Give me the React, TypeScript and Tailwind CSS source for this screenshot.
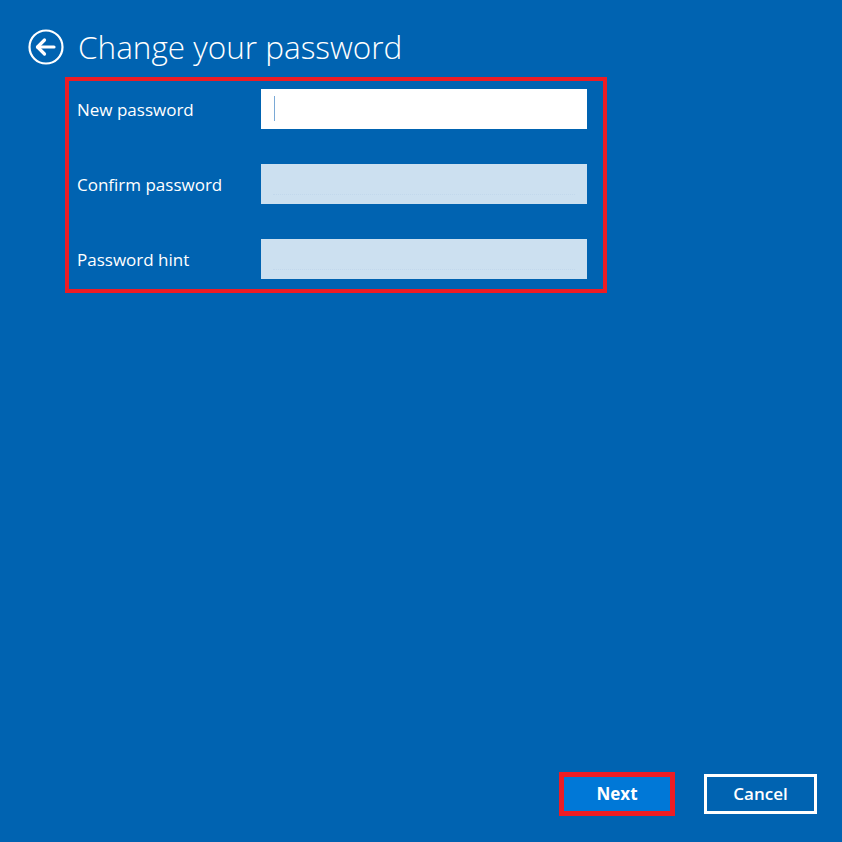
import React from "react";

function BackIcon() {
  return (
    <svg width="36" height="36" viewBox="0 0 36 36" fill="none">
      <circle cx="18" cy="18" r="16.5" stroke="white" strokeWidth="2.2" />
      <path d="M9.5 18H26" stroke="white" strokeWidth="3.2" strokeLinecap="round" />
      <path d="M16.5 11L9.5 18L16.5 25" stroke="white" strokeWidth="3.2" strokeLinecap="round" strokeLinejoin="round" />
    </svg>
  );
}

function Row({ label, active }: { label: string; active?: boolean }) {
  return (
    <div className="flex items-center h-[40px]">
      <div className="w-[184px] text-white text-[17px] leading-none">{label}</div>
      <div
        className={
          active
            ? "relative h-[40px] w-[326px] bg-white"
            : "relative h-[40px] w-[326px] bg-[#cce0f0]"
        }
      >
        {active ? (
          <div className="absolute left-[13px] top-[7px] h-[25px] w-[1px] bg-[#7aa9d6]" />
        ) : (
          <div className="absolute left-[12px] right-[12px] top-[30px] border-b border-dotted border-[#c2d8ec]" />
        )}
      </div>
    </div>
  );
}

export default function App() {
  return (
    <div
      className="h-[842px] w-[842px] bg-[#0063b1] flex flex-col"
      style={{ fontFamily: '"Open Sans", "Noto Sans", sans-serif' }}
    >
      <div className="flex items-center pl-[28px] pt-[28px] h-[65px]">
        <BackIcon />
        <div className="ml-[14px] text-white text-[31.5px] font-light leading-none">
          Change your password
        </div>
      </div>
      <div className="ml-[65px] mt-[12px] w-[542px] h-[216px] border-[4px] border-[#ed1c24] pl-[8px] pt-[8px] flex flex-col gap-[35px]">
        <Row label="New password" active />
        <Row label="Confirm password" />
        <Row label="Password hint" />
      </div>
      <div className="flex-1" />
      <div className="flex items-center justify-end pr-[25px] pb-[26px] gap-[29px]">
        <div className="w-[116px] h-[44px] border-[5px] border-[#ed1c24] bg-[#0078d7] flex items-center justify-center text-white text-[17px] font-bold">
          Next
        </div>
        <div className="w-[113px] h-[40px] border-[3px] border-white flex items-center justify-center text-white text-[17px] font-semibold">
          Cancel
        </div>
      </div>
    </div>
  );
}
